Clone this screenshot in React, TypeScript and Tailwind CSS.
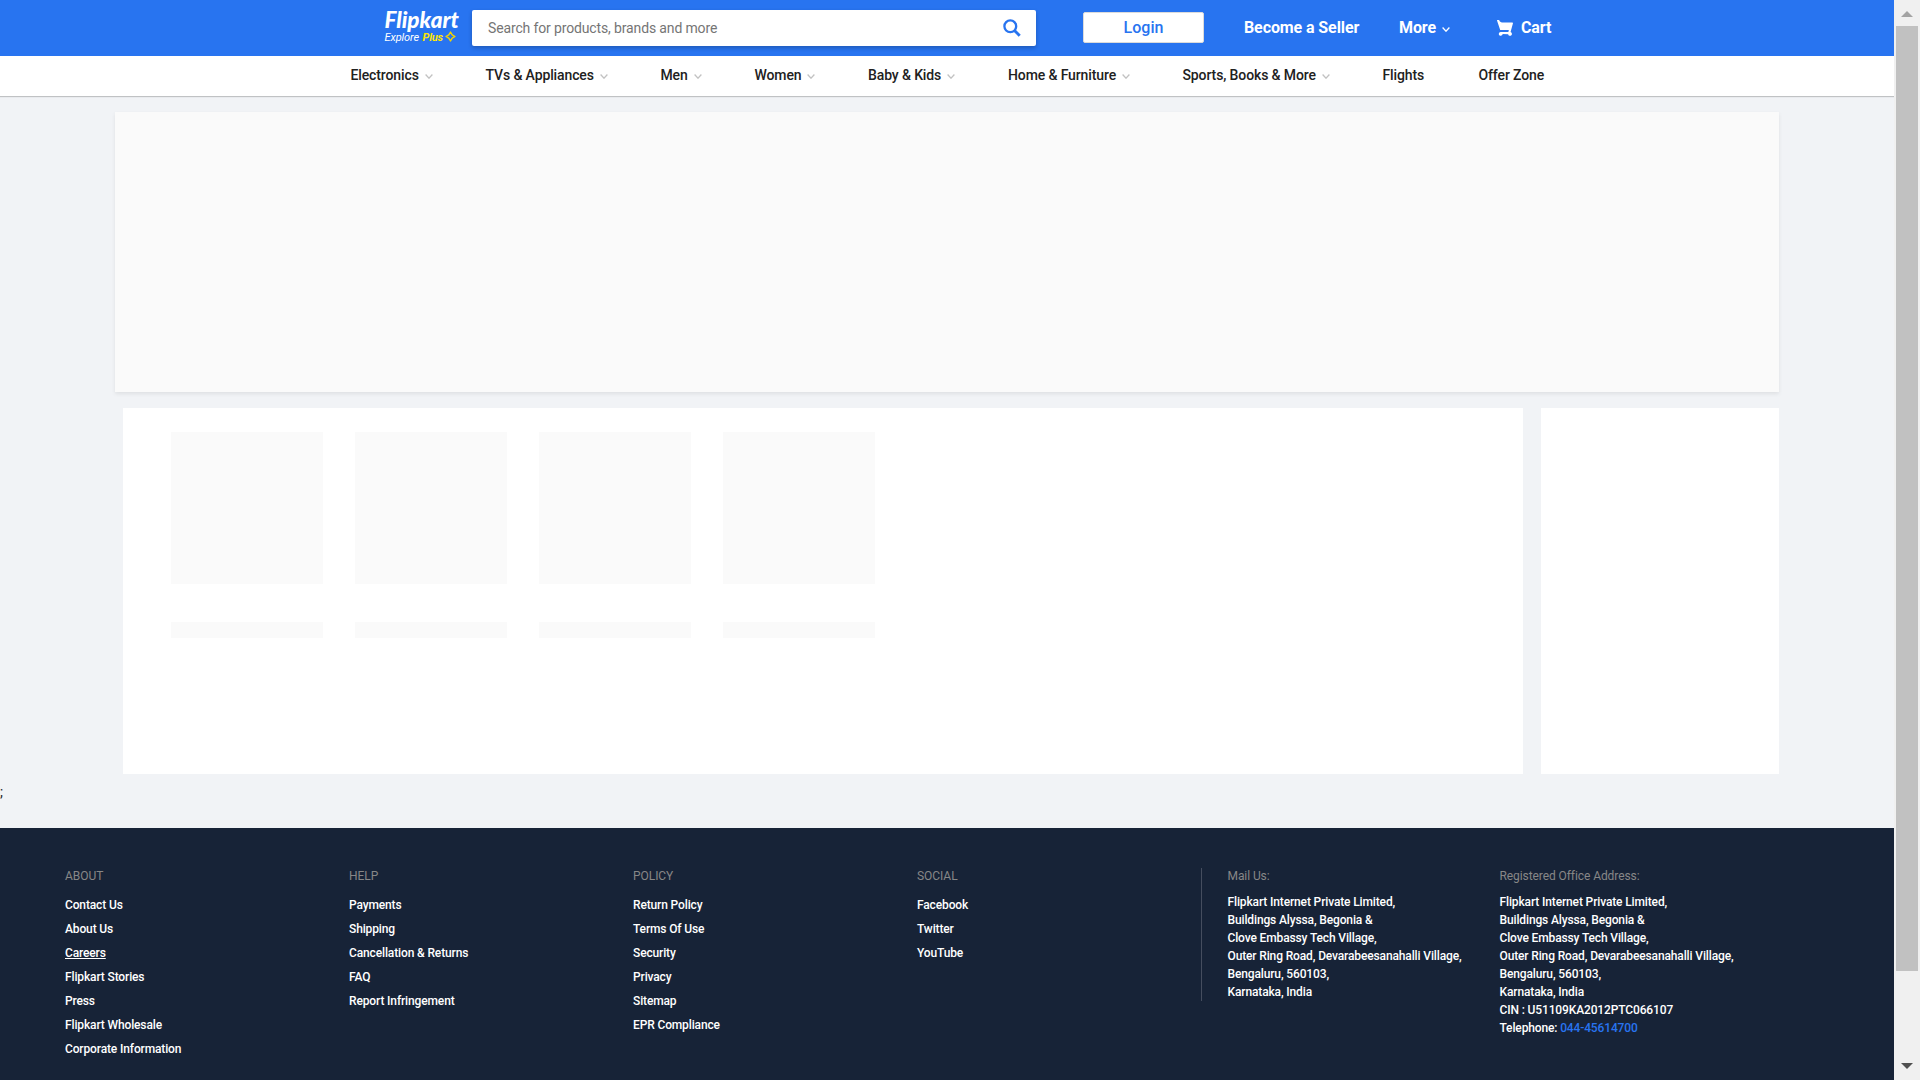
const categories = [
  { label: "Electronics", width: "w-[135px]", menu: true },
  { label: "TVs & Appliances", width: "w-[175px]", menu: true },
  { label: "Men", width: "w-[94px]", menu: true },
  { label: "Women", width: "w-[113.5px]", menu: true },
  { label: "Baby & Kids", width: "w-[140px]", menu: true },
  { label: "Home & Furniture", width: "w-[174.5px]", menu: true },
  { label: "Sports, Books & More", width: "w-[200px]", menu: true },
  { label: "Flights", width: "w-[96px]", menu: false },
  { label: "Offer Zone", width: "w-[66px]", menu: false },
];

const linkColumns = [
  {
    title: "ABOUT",
    links: ["Contact Us", "About Us", "Careers", "Flipkart Stories", "Press", "Flipkart Wholesale", "Corporate Information"],
  },
  { title: "HELP", links: ["Payments", "Shipping", "Cancellation & Returns", "FAQ", "Report Infringement"] },
  { title: "POLICY", links: ["Return Policy", "Terms Of Use", "Security", "Privacy", "Sitemap", "EPR Compliance"] },
  { title: "SOCIAL", links: ["Facebook", "Twitter", "YouTube"] },
];

const address = [
  "Flipkart Internet Private Limited,",
  "Buildings Alyssa, Begonia &",
  "Clove Embassy Tech Village,",
  "Outer Ring Road, Devarabeesanahalli Village,",
  "Bengaluru, 560103,",
  "Karnataka, India",
];

function Chevron({ className }: { className: string }) {
  return (
    <svg viewBox="0 0 8 5" className={`h-[5px] w-2 shrink-0 ${className}`} fill="none" stroke="currentColor" strokeWidth="1.3">
      <path d="M.6.5 4 4.2 7.4.5" />
    </svg>
  );
}

function Header() {
  return (
    <header className="flex h-14 shrink-0 items-start bg-[#2874f0] text-base font-medium text-white">
      <div className="ml-[384.5px] mt-[9px] w-[87.5px] italic">
        <div className="h-[21px] whitespace-nowrap font-['Lato','Noto_Sans',sans-serif] text-[22.5px] font-black leading-[21px]">Flipkart</div>
        <div className="flex h-[15px] items-center whitespace-nowrap text-[11px] leading-[15px]">
          <span className="w-[36px] font-[450] tracking-[-0.1px]">Explore</span>
          <span className="ml-[2px] w-[22px] font-bold tracking-[-0.2px] text-[#ffe500]">Plus</span>
          <svg viewBox="0 0 11 11" className="mb-[3px] size-[11px]" fill="none" stroke="#f5d400" strokeWidth="1.4" strokeLinejoin="round">
            <path d="M5.5 1 7.2 3.8 10 5.5 7.2 7.2 5.5 10 3.8 7.2 1 5.5 3.8 3.8z" />
          </svg>
        </div>
      </div>
      <div className="mt-[10px] flex h-9 w-[564px] items-center justify-between rounded-[2px] bg-white pl-4 pr-[15px] shadow-[0_2px_4px_0_rgba(0,0,0,0.23)]">
        <span className="text-sm font-normal tracking-[-0.14px] text-[#757575]">Search for products, brands and more</span>
        <svg viewBox="0 0 18 18" className="h-[18px] w-[18px]" fill="none" stroke="#2874f0">
          <circle cx="7.3" cy="7.3" r="5.9" strokeWidth="2.3" />
          <path d="m11.5 11.5 5.2 5.2" strokeWidth="3" />
        </svg>
      </div>
      <button className="ml-[47px] mt-3 h-[31px] w-[121px] rounded-[2px] border border-[#dbdbdb] bg-white text-base leading-[30px] text-[#2874f0]">Login</button>
      <span className="ml-10 mt-4 w-[115px] whitespace-nowrap font-bold leading-6 tracking-[-0.1px]">Become a Seller</span>
      <div className="ml-10 mt-4 flex items-center leading-6">
        <span className="w-[37px] font-bold tracking-[-0.1px]">More</span>
        <Chevron className="ml-[6px] mt-[2px] text-white" />
      </div>
      <div className="ml-[47px] mt-4 flex items-center leading-6">
        <svg viewBox="0 0 16 16" className="mr-2 size-4" fill="#fff">
          <path d="M15.32 2.405H4.887C3 2.405 2.46.805 2.46.805L2.257.21C2.208.085 2.083 0 1.946 0H.336C.1 0-.064.24.024.46l.644 1.945L3.11 9.767c.047.137.175.23.32.23h8.418l-.493 1.958H3.768l.002.003c-.017 0-.033-.003-.05-.003-1.06 0-1.92.86-1.92 1.92s.86 1.92 1.92 1.92c.99 0 1.805-.75 1.91-1.712l5.55.076c.12.922.91 1.636 1.867 1.636 1.04 0 1.885-.844 1.885-1.885 0-.866-.584-1.593-1.38-1.814l2.423-8.832c.12-.433-.206-.86-.655-.86" />
        </svg>
        <span className="font-bold tracking-[-0.1px]">Cart</span>
      </div>
    </header>
  );
}

function AddressBlock({ title }: { title: string }) {
  return (
    <div className="whitespace-nowrap">
      <div className="mb-2 font-normal tracking-[-0.08px] text-[#878787]">{title}</div>
      {address.map((line) => (
        <div key={line}>{line}</div>
      ))}
    </div>
  );
}

function Footer() {
  return (
    <footer className="flex h-[252px] shrink-0 bg-[#172337] pl-[65px] pt-10 text-[12px] font-[480] leading-[18px] tracking-[-0.135px] text-white">
      {linkColumns.map((column) => (
        <div key={column.title} className="-mt-px w-[284px]">
          <div className="mb-[11px] font-normal tracking-[-0.05px] text-[#878787]">{column.title}</div>
          {column.links.map((link) => (
            <div key={link} className={link === "Careers" ? "mb-[6px] underline" : "mb-[6px]"}>
              {link}
            </div>
          ))}
        </div>
      ))}
      <div className="h-[133px] w-[272px] border-l border-[#454d5e] pl-[25.5px]">
        <div className="-mt-px">
          <AddressBlock title="Mail Us:" />
        </div>
      </div>
      <div className="-mt-px ml-[26.5px]">
        <AddressBlock title="Registered Office Address:" />
        <div>CIN : U51109KA2012PTC066107</div>
        <div>
          Telephone: <span className="text-[#2874f0]">044-45614700</span>
        </div>
      </div>
    </footer>
  );
}

function Scrollbar() {
  return (
    <aside className="flex w-[26px] flex-col items-center bg-[#f0f0f0]">
      <svg viewBox="0 0 12 6" className="mt-[11px] h-[6px] w-3 shrink-0" fill="#a3a3a3">
        <path d="M6 0 12 6H0z" />
      </svg>
      <div className="mt-[9px] h-[945px] w-[22px] shrink-0 bg-[#c1c1c1]" />
      <svg viewBox="0 0 12 6" className="mt-[92px] h-[6px] w-3 shrink-0" fill="#505050">
        <path d="M0 0H12L6 6z" />
      </svg>
    </aside>
  );
}

export default function App() {
  return (
    <div className="flex h-[1080px] w-[1920px] overflow-hidden bg-[#f1f3f6] font-['Roboto',sans-serif]">
      <div className="flex w-[1894px] flex-col">
        <Header />
        <nav className="flex h-10 shrink-0 items-center whitespace-nowrap bg-white pb-[2px] pl-[350.5px] text-sm font-[460] tracking-[-0.12px] text-[#212121] shadow-[0_1px_1px_0_rgba(0,0,0,0.2)]">
          {categories.map((item) => (
            <div key={item.label} className={`flex shrink-0 items-center ${item.width}`}>
              {item.label}
              {item.menu && <Chevron className="ml-[6px] mt-[2px] text-[#c2c2c2]" />}
            </div>
          ))}
        </nav>
        <main className="h-[732px] shrink-0">
          <div className="ml-[115px] mt-4 h-[280px] w-[1664px] bg-[#fafafa] shadow-[0_2px_4px_0_rgba(0,0,0,0.08)]" />
          <div className="ml-[123px] mt-4 flex h-[366px] gap-[18px]">
            <section className="flex w-[1400px] gap-8 bg-white pl-12 pt-6">
              {[0, 1, 2, 3].map((n) => (
                <div key={n} className="w-[152px]">
                  <div className="h-[152px] bg-[#fafafa]" />
                  <div className="mt-[38px] h-4 bg-[#fafafa]" />
                </div>
              ))}
            </section>
            <aside className="w-[238px] bg-white" />
          </div>
          <div className="mt-[9px] h-[18px] text-sm leading-[18px] text-[#212121]">;</div>
        </main>
        <Footer />
      </div>
      <Scrollbar />
    </div>
  );
}
